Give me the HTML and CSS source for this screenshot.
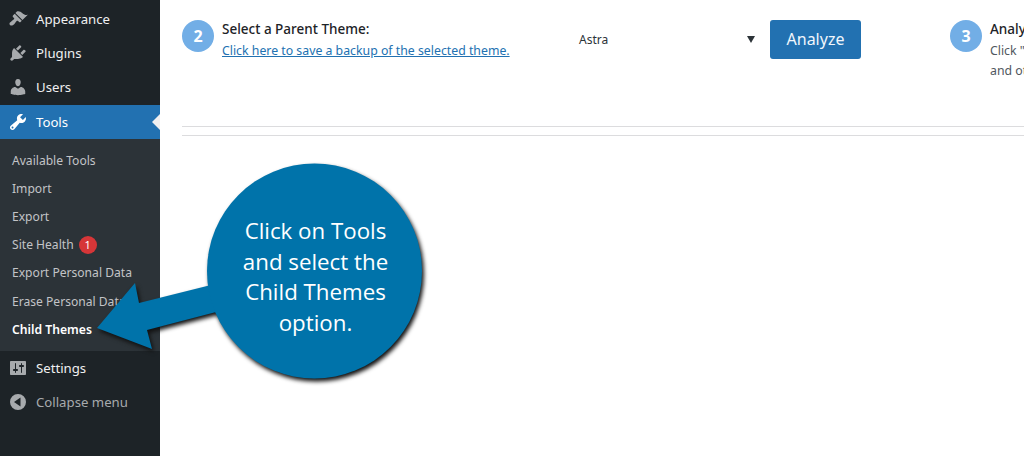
FILE: index.html
```html
<!DOCTYPE html>
<html lang="en">

<head>
    <meta charset="UTF-8">
    <title>Child Themes</title>
    <link rel="stylesheet" href="styles.css">
</head>

<body>
    <div class="page">
        <div class="sidebar">
            <div class="menu-item">
                <svg class="icon" viewBox="0 0 20 20"><path d="M14.48 11.06L7.41 3.99l1.5-1.5c.5-.56 2.3-.47 3.51.32 1.21.8 1.43 1.28 2.91 2.1 1.18.64 2.45 1.26 4.45.85zm-.71.71L6.7 4.7 4.93 6.47c-.39.39-.39 1.02 0 1.41l1.06 1.06c.39.39.39 1.03 0 1.42-.6.6-1.43 1.11-2.21 1.69-.35.26-.7.53-1.01.84C1.43 13.23 1 14.92 2 16s2.77.57 4.13-.77c.31-.31.58-.67.84-1.02.58-.78 1.09-1.6 1.69-2.2.39-.39 1.03-.39 1.42 0l1.06 1.06c.39.39 1.02.39 1.41 0z"/></svg>
                <span>Appearance</span>
            </div>
            <div class="menu-item">
                <svg class="icon" viewBox="0 0 20 20"><path d="M13.11 4.36L9.87 7.6 8 5.73l3.24-3.24c.35-.34 1.05-.2 1.56.32.52.51.66 1.21.31 1.55zm-8 1.77l.91-1.12 9.01 9.01-1.19.84c-.71.71-2.63 1.16-3.82 1.16H6.14L4.9 17.26c-.59.59-1.54.59-2.12 0-.59-.58-.59-1.53 0-2.12l1.24-1.24v-3.88c0-1.13.4-3.19 1.09-3.89zm7.26 3.97l3.24-3.24c.34-.35 1.04-.21 1.55.31.52.51.66 1.21.31 1.55l-3.24 3.25z"/></svg>
                <span>Plugins</span>
            </div>
            <div class="menu-item">
                <svg class="icon" viewBox="0 0 20 20"><path d="M10 9.25c-2.27 0-2.73-3.44-2.73-3.44C7 4.02 7.82 2 9.97 2c2.16 0 2.98 2.02 2.71 3.81 0 0-.41 3.44-2.68 3.44zm0 2.57L12.72 10c2.39 0 4.52 2.33 4.52 4.53v2.49s-3.65 1.13-7.24 1.13c-3.65 0-7.24-1.13-7.24-1.13v-2.49c0-2.25 1.94-4.48 4.47-4.48z"/></svg>
                <span>Users</span>
            </div>
            <div class="menu-item active">
                <svg class="icon" viewBox="0 0 20 20"><path fill-rule="evenodd" d="M16.68 9.77c-1.34 1.34-3.3 1.67-4.95.99l-5.41 6.52c-.99.99-2.59.99-3.58 0s-.99-2.59 0-3.57l6.52-5.42c-.68-1.65-.35-3.61.99-4.95 1.28-1.28 3.12-1.62 4.72-1.06l-2.89 2.89 2.82 2.82 2.86-2.87c.53 1.58.18 3.39-1.08 4.65zM3.81 16.21c.4.39 1.04.39 1.43 0 .4-.4.4-1.04 0-1.43-.39-.4-1.03-.4-1.43 0-.39.39-.39 1.03 0 1.43z"/></svg>
                <span>Tools</span>
                <div class="current-arrow"></div>
            </div>
            <div class="submenu">
                <div class="sub-item">Available Tools</div>
                <div class="sub-item">Import</div>
                <div class="sub-item">Export</div>
                <div class="sub-item">Site Health <span class="badge">1</span></div>
                <div class="sub-item">Export Personal Data</div>
                <div class="sub-item">Erase Personal Data</div>
                <div class="sub-item current">Child Themes</div>
            </div>
            <div class="menu-item">
                <svg class="icon" viewBox="0 0 20 20"><path fill-rule="evenodd" d="M18 16V4c0-.55-.45-1-1-1H3c-.55 0-1 .45-1 1v12c0 .55.45 1 1 1h14c.55 0 1-.45 1-1zM8 11h1c.55 0 1 .45 1 1s-.45 1-1 1H8v1.500c0 .28-.22.5-.5.5s-.5-.22-.5-.5V13H6c-.55 0-1-.45-1-1s.45-1 1-1h1V5.500c0-.28.22-.5.5-.5s.5.22.5.5V11zm5-2h-1c-.55 0-1-.45-1-1s.45-1 1-1h1V5.500c0-.28.22-.5.5-.5s.5.22.5.5V7h1c.55 0 1 .45 1 1s-.45 1-1 1h-1v5.500c0 .28-.22.5-.5.5s-.5-.22-.5-.5V9z"/></svg>
                <span>Settings</span>
            </div>
            <div class="menu-item collapse">
                <svg class="icon" viewBox="0 0 20 20"><path fill-rule="evenodd" d="M10 2a8 8 0 1 0 0 16 8 8 0 0 0 0-16zM12.500 5.500v9L6 10z"/></svg>
                <span>Collapse menu</span>
            </div>
        </div>

        <div class="main">
            <div class="steps">
                <div class="step step-parent">
                    <div class="num">2</div>
                    <div class="step-text">
                        <div class="step-title">Select a Parent Theme:</div>
                        <a class="step-link" href="#">Click here to save a backup of the selected theme.</a>
                    </div>
                </div>
                <div class="select">
                    <span>Astra</span>
                    <div class="select-arrow"></div>
                </div>
                <div class="button">Analyze</div>
                <div class="step step-analyze">
                    <div class="num">3</div>
                    <div class="step-text">
                        <div class="step-title">Analyze</div>
                        <div class="step-desc">Click "</div>
                        <div class="step-desc">and ot</div>
                    </div>
                </div>
            </div>
            <div class="rule"></div>
        </div>

        <!-- callout on top of the screenshot -->
        <div class="callout">
            <svg class="callout-shape" viewBox="0 0 340 230">
                <g>
                    <polygon points="7,168 45,123 49,143 125,124 130,151 57,170 62,189"/>
                    <circle cx="224.500" cy="111" r="107.500"/>
                </g>
            </svg>
            <div class="callout-text">Click on Tools<br>and select the<br>Child Themes<br>option.</div>
        </div>
    </div>
</body>

</html>
```

FILE: styles.css
```css
* {
    box-sizing: border-box;
}

body {
    margin: 0;
    font-family: "Noto Sans", "Open Sans", sans-serif;
    background: #fff;
}

.page {
    display: flex;
    position: relative;
    width: 1024px;
    height: 456px;
    overflow: hidden;
}

/* sidebar */

.sidebar {
    width: 160px;
    flex-shrink: 0;
    padding-top: 2px;
    background: #1d2327;
}

.menu-item {
    display: flex;
    align-items: center;
    position: relative;
    height: 34px;
    padding-left: 8px;
    color: #f0f0f1;
    font-size: 13.2px;
}

.icon {
    width: 20px;
    height: 20px;
    margin-right: 8px;
    fill: #a7aaad;
}

.menu-item.active {
    margin-top: 1px;
    background: #2271b1;
    color: #fff;
}

.menu-item.active .icon {
    fill: #fff;
}

.current-arrow {
    position: absolute;
    right: 0;
    top: 9px;
    border: 8px solid transparent;
    border-left-width: 0;
    border-right-color: #f0f0f1;
}

.menu-item.collapse {
    color: #a7aaad;
}

.submenu {
    height: 212px;
    padding-top: 7px;
    background: #2c3338;
}

.sub-item {
    display: flex;
    align-items: center;
    height: 28.2px;
    padding-left: 12px;
    color: #c3c4c7;
    font-size: 12.1px;
    white-space: nowrap;
}

.sub-item.current {
    color: #fff;
    font-size: 12.2px;
    font-weight: 600;
}

.badge {
    display: inline-block;
    width: 18px;
    height: 18px;
    margin-left: 5px;
    border-radius: 50%;
    background: #d63638;
    color: #fff;
    font-size: 11px;
    line-height: 18px;
    text-align: center;
}

/* main area */

.main {
    flex: 1;
    min-width: 0;
    overflow: hidden;
    padding: 20px 0 0 22px;
}

.steps {
    display: flex;
    height: 106px;
    white-space: nowrap;
}

.step {
    display: flex;
    flex-shrink: 0;
}

.num {
    width: 32px;
    height: 32px;
    flex-shrink: 0;
    border-radius: 50%;
    background: #72aee6;
    color: #fff;
    font-size: 16px;
    font-weight: 700;
    line-height: 32px;
    text-align: center;
}

.step-text {
    margin-left: 8px;
    font-size: 12.3px;
}

.step-title {
    height: 19px;
    line-height: 19px;
    color: #1d2327;
    font-size: 13.5px;
    font-weight: 500;
}

.step-link {
    display: block;
    margin-top: 1px;
    line-height: 21px;
    color: #2271b1;
}

.step-desc {
    line-height: 19.5px;
    color: #50575e;
}

.step-analyze .step-title {
    margin-bottom: 2px;
}

.step-parent {
    width: 397px;
}

.select {
    display: flex;
    flex-shrink: 0;
    align-items: center;
    justify-content: space-between;
    width: 191px;
    height: 39px;
    padding: 0 15px 0 0;
    color: #2c3338;
    font-size: 12px;
}

.select-arrow {
    border: 4px solid transparent;
    border-top: 7px solid #2c3338;
    border-bottom-width: 0;
}

.button {
    flex-shrink: 0;
    width: 91px;
    height: 39px;
    border-radius: 3px;
    background: #2271b1;
    color: #f0f6fc;
    font-size: 16px;
    line-height: 38px;
    text-align: center;
}

.step-analyze {
    margin-left: 89px;
}

.rule {
    height: 10px;
    border-top: 1px solid #dcdcde;
    border-bottom: 1px solid #dcdcde;
}

/* callout */

.callout {
    position: absolute;
    left: 90px;
    top: 160px;
    width: 340px;
    height: 230px;
}

.callout-shape {
    display: block;
    width: 340px;
    height: 230px;
    fill: #0073aa;
    filter: drop-shadow(2px 3px 2px #111);
}

.callout-text {
    position: absolute;
    left: 117px;
    top: 56px;
    width: 217px;
    color: #fff;
    font-family: "Open Sans", sans-serif;
    font-size: 22.3px;
    line-height: 30.500px;
    text-align: center;
}
```
